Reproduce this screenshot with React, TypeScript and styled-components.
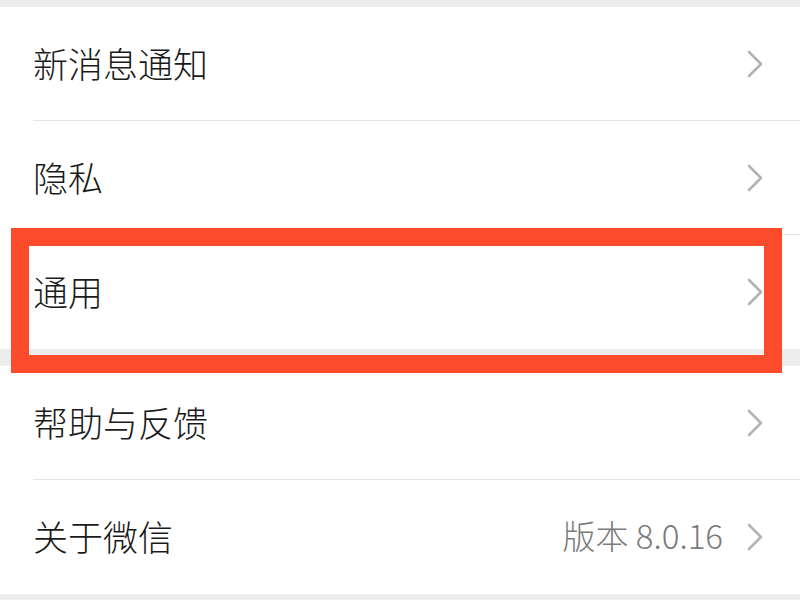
import React from "react";
import styled, { createGlobalStyle } from "styled-components";

const GlobalStyle = createGlobalStyle`
  html, body {
    margin: 0;
    padding: 0;
    background: #ededed;
  }
  body {
    font-family: "Noto Sans CJK SC", "Noto Sans", sans-serif;
  }
`;

const Page = styled.div`
  width: 800px;
  height: 600px;
  overflow: hidden;
  background: #ededed;
  padding-top: 7px;
  box-sizing: border-box;
`;

const Group = styled.div<{ $gap?: number }>`
  background: #fff;
  margin-bottom: ${(p) => p.$gap ?? 0}px;
`;

const Row = styled.div<{ $divider?: boolean }>`
  position: relative;
  height: 114px;
  display: flex;
  align-items: center;
  padding-left: 33px;
  box-sizing: border-box;
  &::after {
    content: "";
    display: ${(p) => (p.$divider ? "block" : "none")};
    position: absolute;
    left: 33px;
    right: 0;
    bottom: 0;
    height: 1px;
    background: #e5e5e5;
  }
`;

const Label = styled.div`
  flex: 1;
  font-size: 35px;
  font-weight: 300;
  color: #1a1a1a;
  line-height: 1;
  margin-top: -3px;
`;

const Value = styled.div`
  font-size: 33px;
  font-weight: 300;
  color: #7c7c7c;
  margin-right: 24px;
  line-height: 1;
  margin-top: -3px;
`;

const Arrow = styled.svg`
  width: 16px;
  height: 28px;
  margin-right: 37px;
  flex-shrink: 0;
`;

const Highlight = styled.div`
  position: absolute;
  top: -7px;
  left: 11px;
  right: 18px;
  bottom: -24px;
  border: 18px solid #fb4b2b;
  z-index: 2;
  pointer-events: none;
`;

const Chevron = () => (
  <Arrow viewBox="0 0 16 28">
    <path
      d="M2 2 L14 14 L2 26"
      fill="none"
      stroke="#b3b3b3"
      strokeWidth="2.6"
      strokeLinecap="round"
      strokeLinejoin="round"
    />
  </Arrow>
);

interface ItemProps {
  label: string;
  value?: string;
  divider?: boolean;
  marked?: boolean;
}

const Item = ({ label, value, divider, marked }: ItemProps) => (
  <Row $divider={divider}>
    <Label>{label}</Label>
    {value && <Value>{value}</Value>}
    <Chevron />
    {marked && <Highlight />}
  </Row>
);

export default function App() {
  return (
    <>
      <GlobalStyle />
      <Page>
        <Group $gap={17}>
          <Item label="新消息通知" divider />
          <Item label="隐私" divider />
          <Item label="通用" marked />
        </Group>
        <Group>
          <Item label="帮助与反馈" divider />
          <Item label="关于微信" value="版本 8.0.16" />
        </Group>
      </Page>
    </>
  );
}
